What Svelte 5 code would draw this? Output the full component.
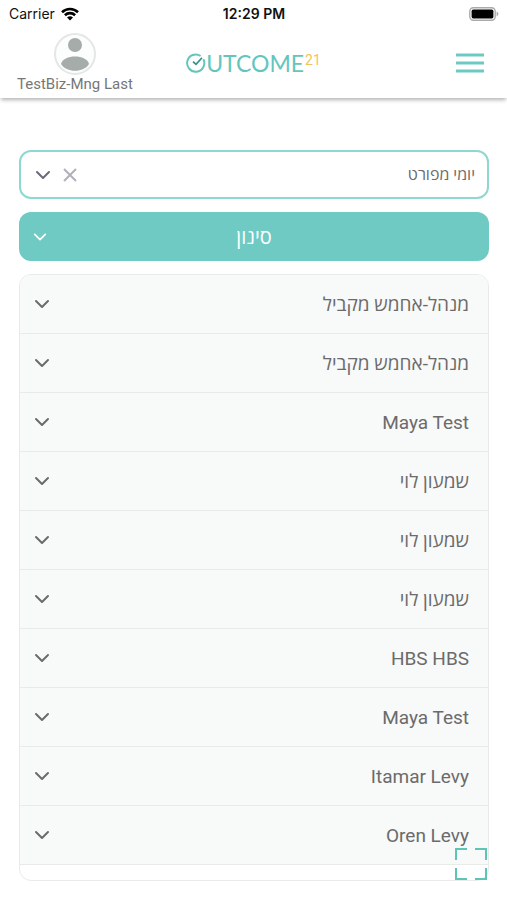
<script lang="ts">
	let people = $state([
		{ name: 'מנהל-אחמש מקביל', open: false },
		{ name: 'מנהל-אחמש מקביל', open: false },
		{ name: 'Maya Test', open: false },
		{ name: 'שמעון לוי', open: false },
		{ name: 'שמעון לוי', open: false },
		{ name: 'שמעון לוי', open: false },
		{ name: 'HBS HBS', open: false },
		{ name: 'Maya Test', open: false },
		{ name: 'Itamar Levy', open: false },
		{ name: 'Oren Levy', open: false }
	]);

	let report = $state('daily');
	let filterOpen = $state(false);
</script>

{#snippet chevron()}
	<svg class="chevron" viewBox="0 0 16 10" aria-hidden="true">
		<path d="M2 2l6 6 6-6" />
	</svg>
{/snippet}

<div class="status-bar">
	<div class="carrier">
		<span>Carrier</span>
		<svg class="wifi" viewBox="0 0 18 14" aria-hidden="true">
			<path d="M1 5.2a11.5 11.5 0 0 1 16 0" />
			<path d="M3.9 8.2a7.3 7.3 0 0 1 10.2 0" />
			<path class="fill" d="M9 13.6l-3-3a4.3 4.3 0 0 1 6 0z" />
		</svg>
	</div>
	<span class="time">12:29 PM</span>
	<svg class="battery" viewBox="0 0 30 14" aria-hidden="true">
		<rect class="shell" x="0.8" y="0.8" width="25.4" height="12.4" rx="3.6" />
		<rect x="2.6" y="2.6" width="21.8" height="8.8" rx="1.6" />
		<path class="tip" d="M27.6 4.6c2.4 1 2.4 3.8 0 4.8z" />
	</svg>
</div>

<header class="header">
	<a class="profile" href="#profile">
		<svg class="avatar" viewBox="0 0 42 42" aria-hidden="true">
			<circle class="ring" cx="21" cy="21" r="20" />
			<circle cx="21" cy="12" r="7" />
			<path d="M7 31C9 21 33 21 35 31C30 40 12 40 7 31z" />
		</svg>
		<span>TestBiz-Mng Last</span>
	</a>
	<a class="logo" href="#home" aria-label="Outcome21">
		<svg class="logo-mark" viewBox="0 0 20 20" aria-hidden="true">
			<path d="M17.4 6.2A8.6 8.6 0 1 1 14.6 3" />
			<path class="tick" d="M7 8.6l3 2.8 6-6.6" />
		</svg>
		<span class="word">UTCOME</span>
		<span class="number">21</span>
	</a>
	<button class="menu" aria-label="תפריט">
		<svg viewBox="0 0 28 20" aria-hidden="true">
			<path d="M0 2h28M0 10h28M0 18h28" />
		</svg>
	</button>
</header>

<main class="content" dir="rtl">
	<div class="report">
		<select bind:value={report} aria-label="סוג דוח">
			<option value=""></option>
			<option value="daily">יומי מפורט</option>
		</select>
		<button class="clear" aria-label="נקה" onclick={() => (report = '')}>
			<svg viewBox="0 0 14 14" aria-hidden="true">
				<path d="M1 1l12 12M13 1L1 13" />
			</svg>
		</button>
		{@render chevron()}
	</div>

	<button class="filter" aria-expanded={filterOpen} onclick={() => (filterOpen = !filterOpen)}>
		<span>סינון</span>
		{@render chevron()}
	</button>

	<ul class="people">
		{#each people as person}
			<li>
				<button
					class="person"
					class:open={person.open}
					aria-expanded={person.open}
					onclick={() => (person.open = !person.open)}
				>
					<span>{person.name}</span>
					{@render chevron()}
				</button>
			</li>
		{/each}
	</ul>
</main>

<button class="expand" aria-label="מסך מלא">
	<svg viewBox="0 0 32 32" aria-hidden="true">
		<path d="M1 12V1h11M20 1h11v11M31 20v11H20M12 31H1V20" />
	</svg>
</button>

<style>
	:global(body) {
		background: #fff;
		color: #6b6b6b;
		font-family: Roboto, 'Open Sans', 'Liberation Sans', sans-serif;
	}

	button,
	select {
		border: 0;
		padding: 0;
		background: none;
		color: inherit;
		font: inherit;
		cursor: pointer;
	}

	svg {
		display: block;
		fill: none;
		stroke: currentColor;
	}

	.status-bar {
		display: grid;
		grid-template-columns: 1fr auto 1fr;
		align-items: center;
		height: 27px;
		padding: 0 8px 0 9px;
		color: #111;
		font-family: Inter, sans-serif;
		font-size: 14px;
	}

	.carrier {
		display: flex;
		align-items: center;
		gap: 6px;
	}

	.wifi {
		width: 18px;
		height: 14px;
		stroke: #000;
		stroke-width: 2.6;
	}

	.wifi .fill {
		fill: #000;
		stroke: none;
	}

	.time {
		font-weight: 600;
	}

	.battery {
		justify-self: end;
		width: 30px;
		height: 14px;
		fill: #000;
		stroke: none;
	}

	.battery .shell {
		fill: none;
		stroke: #aaa;
		stroke-width: 1.4;
	}

	.battery .tip {
		fill: #aaa;
	}

	.header {
		display: grid;
		grid-template-columns: 1fr auto 1fr;
		align-items: center;
		height: 71px;
		padding: 0 17px;
		box-shadow: 0 3px 4px -1px rgba(0, 0, 0, 0.3);
	}

	.profile {
		display: flex;
		flex-direction: column;
		align-items: center;
		justify-self: start;
		color: #777;
		font-size: 15px;
		line-height: 18px;
		text-decoration: none;
		white-space: nowrap;
	}

	.avatar {
		width: 42px;
		height: 42px;
		fill: #a5aca9;
		stroke: none;
	}

	.avatar .ring {
		fill: #fcfdfd;
		stroke: #e4e7e6;
		stroke-width: 2;
	}

	.logo {
		display: flex;
		align-items: center;
		color: #62c6bd;
		text-decoration: none;
	}

	.logo-mark {
		width: 20px;
		height: 20px;
		stroke-width: 2;
	}

	.logo-mark .tick {
		stroke: #2f8f88;
		stroke-width: 1.6;
	}

	.word {
		font-family: Lato, sans-serif;
		font-size: 23px;
		line-height: 24px;
	}

	.number {
		align-self: flex-start;
		margin-left: 1px;
		color: #f3c353;
		font-size: 14px;
		line-height: 18px;
	}

	.menu {
		justify-self: end;
		margin-right: 6px;
		color: #6dcac3;
	}

	.menu svg {
		width: 28px;
		height: 20px;
		stroke-width: 3;
	}

	.content {
		display: flex;
		flex-direction: column;
		gap: 13px;
		padding: 52px 18px 18px 19px;
	}

	.chevron {
		width: 16px;
		height: 10px;
		flex: none;
		stroke-width: 2;
		stroke-linecap: round;
		stroke-linejoin: round;
		pointer-events: none;
	}

	.report {
		display: flex;
		align-items: center;
		gap: 12px;
		height: 49px;
		box-sizing: border-box;
		padding: 0 12px 0 14px;
		border: 2px solid #8fd8d1;
		border-radius: 12px;
		color: #6b6a7c;
	}

	.report select {
		flex: 1;
		height: 100%;
		appearance: none;
		color: #6b6b6b;
		font-size: 16px;
		outline: none;
	}

	.clear {
		color: #b0b0bc;
	}

	.clear svg {
		width: 14px;
		height: 14px;
		stroke-width: 2;
	}

	.filter {
		display: grid;
		grid-template-columns: 1fr auto 1fr;
		align-items: center;
		height: 49px;
		padding: 0 14px;
		border-radius: 12px;
		background: #6fcac4;
		color: #fff;
		font-size: 20px;
	}

	.filter span {
		grid-column: 2;
	}

	.filter .chevron {
		justify-self: end;
		width: 14px;
	}

	.people {
		margin: 0;
		padding: 0 0 15px;
		overflow: hidden;
		border: 1px solid #e9ebeb;
		border-radius: 12px;
		list-style: none;
	}

	.person {
		display: flex;
		align-items: center;
		justify-content: space-between;
		width: 100%;
		height: 59px;
		padding: 0 19px 0 14px;
		border-bottom: 1px solid #e9ebeb;
		background: #f8f9f9;
		font-size: 19px;
	}

	.person.open .chevron {
		transform: rotate(180deg);
	}

	.expand {
		position: fixed;
		right: 20px;
		bottom: 20px;
		color: #5ec4b6;
	}

	.expand svg {
		width: 32px;
		height: 32px;
		stroke-width: 2;
	}
</style>
